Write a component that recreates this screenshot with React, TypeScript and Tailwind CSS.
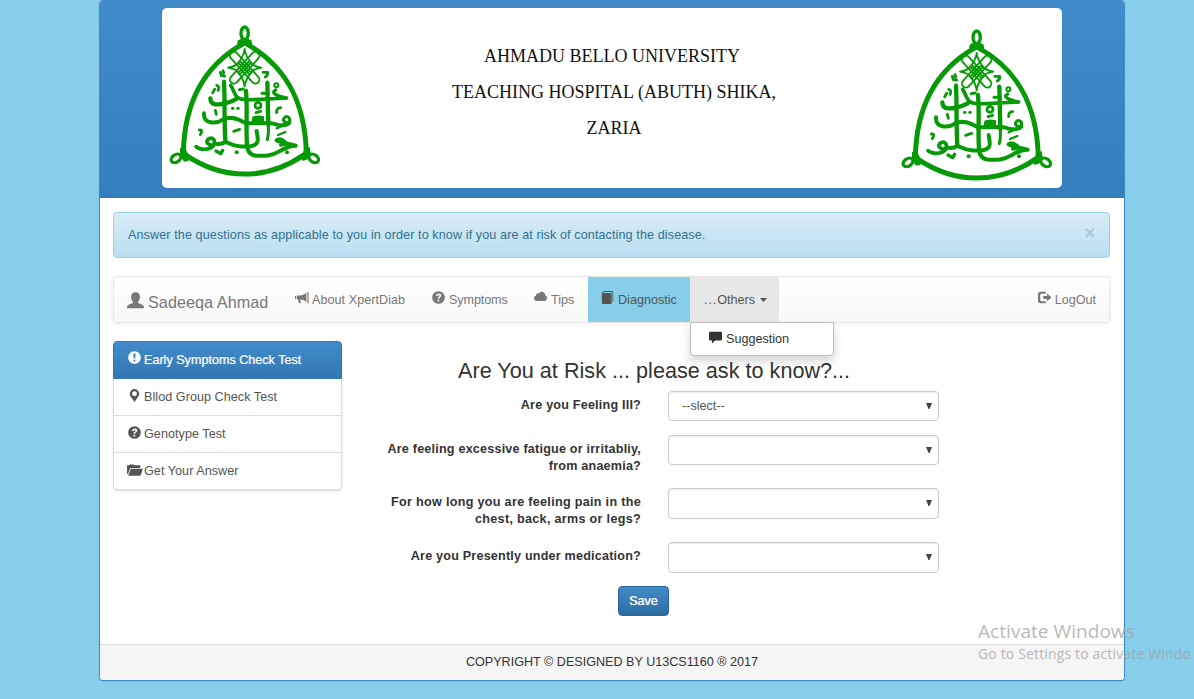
import React from "react";

function Crest() {
  return (
    <svg viewBox="24 42 462 462" className="h-[154px] w-[154px]" fill="none" stroke="#069a06" strokeLinecap="round" strokeLinejoin="round">
      <g strokeWidth="15">
        <path d="M250 101C134 166 73 272 70 430" />
        <path d="M258 101C376 166 435 272 439 430" />
        <path d="M74 433C190 512 320 512 434 433" />
      </g>
      <g strokeWidth="10">
        <ellipse cx="254" cy="70" rx="11" ry="19" />
        <ellipse cx="48" cy="445" rx="16" ry="11" transform="rotate(-35 48 445)" />
        <ellipse cx="461" cy="445" rx="16" ry="11" transform="rotate(35 461 445)" />
      </g>
      <path fill="#069a06" stroke="none" d="M234 91l9-4h22l9 4 3 11-17 4h-12l-17-4zM60 414l14-4 14 30-2 12-14 3-12-18zM449 412l-14 0-12 32 4 8 12-2 14-16z" />
      <g transform="translate(254 173)" strokeWidth="5.5">
        <rect x="-60" y="-12" width="120" height="24" rx="12" transform="rotate(48)" />
        <rect x="-60" y="-12" width="120" height="24" rx="12" transform="rotate(-48)" />
        <path d="M0-56C-3-34-12-22-24-10M0-56C3-34 12-22 24-10M0 56C-3 34-12 22-24 10M0 56C3 34 12 22 24 10M-50 0Q-30-3-18-14L14 20M50 0Q30-3 18-14L-14 20M-50 0Q-30 3-18 14L14-20M50 0Q30 3 18 14L-14-20" />
      </g>
      <g strokeWidth="13">
        <path d="M192 215C195 270 192 330 196 394" />
        <path d="M258 243C263 300 257 350 261 405" />
        <path d="M322 218L325 345" />
        <path d="M325 345C326 365 325 378 322 389" strokeWidth="9" />
        <path d="M151 265C152 289 178 284 193 280C211 276 224 272 232 264" />
        <path d="M212 226C220 238 222 252 232 262C240 270 260 270 284 269L380 264" strokeWidth="11" />
        <path d="M347 240C332 247 345 256 378 264" strokeWidth="10" />
        <path d="M306 250H325" strokeWidth="9" />
        <path d="M132 310C130 343 168 343 190 328C213 317 235 327 255 338C275 343 325 335 347 343C363 347 380 347 388 338" strokeWidth="12" />
        <path d="M388 338C393 318 377 315 371 326C367 333 378 339 388 338" strokeWidth="9" />
        <path d="M108 410C121 422 151 420 161 406C168 390 158 381 147 386C133 395 144 407 160 405" strokeWidth="11" />
        <path d="M164 400C176 404 186 402 196 396C206 398 218 408 237 409C267 411 290 410 293 393C294 380 291 374 290 363" strokeWidth="12" />
        <path d="M350 391C358 384 369 390 379 400L407 407C386 407 370 417 356 425C332 440 311 438 291 437C271 437 261 425 261 400" strokeWidth="12" />
        <path d="M354 394L378 402L362 405" strokeWidth="10" />
      </g>
      <g strokeWidth="8.5">
        <path d="M181 187L184 197L194 198M189 182L191 189" />
        <path d="M309 187H323Q324 196 316 201" />
        <circle cx="349" cy="226" r="6" strokeWidth="6" />
        <path d="M170 226Q180 228 174 241M164 238L158 248" />
        <path d="M238 239L250 237" />
        <circle cx="294" cy="286" r="9" />
        <path d="M288 308L302 304M166 301L169 313M350 308Q349 294 362 293" />
        <path d="M350 355L366 348M354 375L376 366" strokeWidth="7" />
        <path d="M221 364L239 358M118 360Q130 358 121 374" />
        <path d="M168 423L182 431L188 421" strokeWidth="10" />
      </g>
      <g fill="#069a06" stroke="none">
        <path d="M277 320Q294 313 312 319V336H275Z" />
        <circle cx="218" cy="295" r="5" />
        <circle cx="234" cy="295" r="5" />
        <circle cx="230" cy="427" r="6" />
        <circle cx="381" cy="427" r="6" />
      </g>
    </svg>
  );
}

const ICONS: Record<string, React.ReactNode> = {
  user: <path d="M8 .2c2.700 0 4.200 1.700 4.200 4.200 0 1.900-.7 3.700-1.900 4.700-.2.8.2 1.300 1 1.600l3.200 1.300c1 .5 1.500 1.500 1.500 3.200H0c0-1.700.5-2.700 1.500-3.200l3.200-1.300c.8-.3 1.200-.8 1-1.600-1.200-1-1.900-2.800-1.900-4.700C3.800 1.900 5.300.2 8 .2z" />,
  bullhorn: <path d="M14.200 1h1.300v13h-1.300zM13 2v10.500C10.500 10.300 8 9.600 5.800 9.600l1 4.400H4.600L3.200 9.500H2V5h3.500C8 5 10.800 4 13 2zM0 5.700h1.200V9H0z" />,
  question: <path fillRule="evenodd" d="M8 .2a7.800 7.800 0 110 15.600A7.800 7.800 0 018 .2zM5 6.300h2.200C7.200 5.500 7.600 5 8.200 5s1 .4 1 .9c0 1.200-2.400 1.500-2.400 3.700h2c0-1.400 2.700-1.900 2.700-4C11.500 4 10.200 3 8.300 3 6.300 3 5 4.200 5 6.300zM6.800 10.800V13h2.100v-2.200z" />,
  exclamation: <path fillRule="evenodd" d="M8 .2a7.800 7.800 0 110 15.600A7.800 7.800 0 018 .2zM6.600 3l.5 6.200h1.800L9.400 3zM6.900 10.700V13h2.200v-2.300z" />,
  cloud: <path d="M3.500 13.500C1.400 13.500 0 12 0 10.200c0-1.600 1-2.800 2.500-3.100C2.400 5.300 3.700 4 5.200 4c.4 0 .8.1 1.200.3C7 2.900 8.100 2 9.700 2c2.300 0 4 1.800 4 4v.5C15.200 7 16 8.300 16 9.900c0 2-1.400 3.600-3.500 3.600z" />,
  book: <path d="M3.500 0H15v13.500h-1V1.200H3.600L2.300 2.400H13V16H2.200L1 14.700V2.500z" />,
  comment: <path d="M1.500 1h13c.8 0 1.500.6 1.500 1.400v7.900c0 .8-.7 1.400-1.500 1.400H7.800L3.600 15.500v-3.800H1.500C.7 11.700 0 11.100 0 10.300V2.400C0 1.600.7 1 1.500 1z" />,
  logout: <path d="M9.500 1v2.300H4.300c-1 0-1.500.5-1.500 1.400v6.500c0 .9.5 1.400 1.500 1.400h5.200V15h-6C1.300 15 0 13.800 0 11.700V4.400C0 2.200 1.300 1 3.500 1zM11 3.200L16.600 8 11 12.700V9.800H6.500V6.200H11z" />,
  marker: <path fillRule="evenodd" d="M8 0a5.800 5.800 0 015.800 5.800c0 2.700-1.600 4.100-3 6.200L8 16l-2.700-4c-1.500-2.100-3.100-3.500-3.100-6.200A5.800 5.800 0 018 0zm0 2.800a3 3 0 100 6 3 3 0 000-6z" />,
  folder: <path d="M0 2.500h2l1-1h3.800l1 1h6.400v2.700H3.400L1.400 11 0 12zM4 6h13l-2.600 7.500H1.200z" />,
};

function Icon({ name, className }: { name: string; className: string }) {
  return (
    <svg viewBox="0 0 16 16" fill="currentColor" className={`shrink-0 overflow-visible ${className}`}>
      {ICONS[name]}
    </svg>
  );
}

function Select({ value, size }: { value?: string; size: string }) {
  return (
    <div className={`flex w-[271px] items-center justify-between rounded border border-[#ccc] bg-white pr-[6px] pl-[13px] text-[#555] shadow-[inset_0_1px_1px_rgba(0,0,0,0.075)] ${size}`}>
      <span>{value}</span>
      <svg viewBox="0 0 6 6" className="mb-[1px] h-[6px] w-[6px]" fill="#444">
        <path d="M0 0h6L3.500 6h-1z" />
      </svg>
    </div>
  );
}

export default function App() {
  return (
    <div className="relative h-[699px] w-[1194px] overflow-hidden bg-[#87ceeb] pl-[99px] font-['Liberation_Sans',Arial,sans-serif] text-[12.600px] leading-[18px] text-[#333]">
      <div className="flex h-[681px] w-[1026px] flex-col overflow-hidden rounded border border-t-0 border-[#428bca] bg-white shadow-[0_1px_2px_rgba(0,0,0,0.05)]">
        <header className="h-[198px] shrink-0 bg-linear-to-b from-[#428bca] to-[#357ebd] pt-2">
          <div className="mx-auto flex h-[180px] w-[900px] justify-between rounded-[5px] bg-white pr-[8px] pl-[6px]">
            <div className="pt-[16px]"><Crest /></div>
            <div className="w-[400px] pt-[30px] pl-[6px] text-center font-['Liberation_Serif',serif] text-[18px] leading-[36px] whitespace-nowrap text-[#111]">
              <p className="-ml-1">AHMADU BELLO UNIVERSITY</p>
              <p>TEACHING HOSPITAL (ABUTH) SHIKA,</p>
              <p>ZARIA</p>
            </div>
            <div className="pt-[20px]"><Crest /></div>
          </div>
        </header>

        <main className="flex-1 pt-[14px] pl-[13px]">
          <div className="flex h-[46px] w-[997px] justify-between rounded border border-[#9acfea] bg-linear-to-b from-[#d9edf7] to-[#b9def0] px-[14px] pt-[13px] text-[#31708f]">
            <span className="tracking-[0.1px]">Answer the questions as applicable to you in order to know if you are at risk of contacting the disease.</span>
            <span className="-mt-[2px] text-[18px] font-bold text-[#a5c9da]">×</span>
          </div>

          <nav className="mt-[18px] flex h-[47px] w-[997px] rounded border border-[#e7e7e7] bg-linear-to-b from-white to-[#f8f8f8] whitespace-nowrap text-[#777] shadow-[0_1px_5px_rgba(0,0,0,0.075)]">
            <a className="flex w-[168px] pt-[16px] pl-[13px] text-[16.200px] tracking-[0.05px]">
              <Icon name="user" className="-mt-[1px] mr-[4px] h-[17px] w-[17px]" />
              Sadeeqa Ahmad
            </a>
            <a className="flex w-[137px] pt-[14px] pl-[13px] tracking-[0.05px]">
              <Icon name="bullhorn" className="mr-[3px] h-[14px] w-[14px]" />
              About XpertDiab
            </a>
            <a className="flex w-[102px] pt-[14px] pl-[13px] tracking-[-0.1px]">
              <Icon name="question" className="mr-[4px] h-[13px] w-[13px]" />
              Symptoms
            </a>
            <a className="flex w-[67px] pt-[14px] pl-[13px]">
              <Icon name="cloud" className="-mt-[1px] mr-[4px] h-[13px] w-[13px]" />
              Tips
            </a>
            <a className="flex w-[102px] bg-[#87ceeb] pt-[14px] pl-[13px] text-[#555]">
              <Icon name="book" className="mr-[4px] h-[13px] w-[13px]" />
              Diagnostic
            </a>
            <div className="relative w-[89px] bg-[#e7e7e7] pt-[14px] pl-[14px] text-[#555]">
              <a className="flex">
                <span className="tracking-[0.9px]">...</span>Others
                <svg viewBox="0 0 7 4" className="mt-[7px] ml-[5px] h-[4px] w-[7px]" fill="#555"><path d="M0 0h7L3.500 4z" /></svg>
              </a>
              <div className="absolute top-[45px] left-0 z-10 flex h-[34px] w-[144px] rounded-b border border-[#bfbfbf] bg-white pt-[7px] pl-[18px] text-[#333] shadow-[0_5px_10px_rgba(0,0,0,0.175)]">
                <Icon name="comment" className="mt-[1px] mr-[4px] h-[13px] w-[13px]" />
                Suggestion
              </div>
            </div>
            <a className="ml-auto flex pt-[14px] pr-[13px]">
              <Icon name="logout" className="mr-[4px] h-[13px] w-[13px]" />
              LogOut
            </a>
          </nav>

          <div className="mt-[18px] flex">
            <ul className="h-[149px] w-[229px] rounded text-[#555] shadow-[0_1px_2px_rgba(0,0,0,0.15)]">
              <li className="flex h-[38px] rounded-t border border-[#3278b3] bg-linear-to-b from-[#428bca] to-[#3278b3] pt-[9px] pl-[14px] text-white [text-shadow:0_-1px_0_#3278b3,0_0_1px_#fff]">
                <Icon name="exclamation" className="mr-[3px] h-[13px] w-[13px]" />
                Early Symptoms Check Test
              </li>
              <li className="flex h-[37px] border-x border-b border-[#ddd] pt-[9px] pl-[14px] tracking-[0.05px]">
                <Icon name="marker" className="mt-[1px] mr-[3px] h-[13px] w-[13px]" />
                Bllod Group Check Test
              </li>
              <li className="flex h-[37px] border-x border-b border-[#ddd] pt-[9px] pl-[14px] tracking-[0.05px]">
                <Icon name="question" className="mt-[1px] mr-[3px] h-[13px] w-[13px]" />
                Genotype Test
              </li>
              <li className="flex h-[37px] rounded-b border-x border-b border-[#ddd] pt-[9px] pl-[13px] tracking-[0.05px]">
                <Icon name="folder" className="mt-[1px] mr-[2px] h-[15px] w-[15px]" />
                Get Your Answer
              </li>
            </ul>

            <form className="ml-[32px] w-[565px] pt-[18px]">
              <h3 className="pl-[84px] text-[21.600px] leading-[24px] tracking-[0.02px] whitespace-nowrap">Are You at Risk ... please ask to know?...</h3>
              <div className="mt-[8px] grid grid-cols-[267px_271px] gap-x-[27px] text-right leading-[17px] font-bold tracking-[0.2px]">
                <label className="h-[44px] pt-[6px]">Are you Feeling III?</label>
                <div className="text-left font-normal tracking-normal"><Select value="--slect--" size="h-[30px]" /></div>
                <label className="h-[53px] pt-[6px]">Are feeling excessive fatigue or irritabliy,<br />from anaemia?</label>
                <Select size="h-[30px]" />
                <label className="h-[54px] pt-[6px] tracking-[0.3px]">For how long you are feeling pain in the<br />chest, back, arms or legs?</label>
                <Select size="h-[31px]" />
                <label className="h-[44px] pt-[6px]">Are you Presently under medication?</label>
                <Select size="h-[31px]" />
              </div>
              <button type="button" className="ml-[244px] h-[30px] w-[51px] rounded border border-[#2b669a] bg-linear-to-b from-[#428bca] to-[#2d6ca2] text-white [text-shadow:0_-1px_0_rgba(0,0,0,0.2),0_0_1px_#fff]">Save</button>
            </form>
          </div>
        </main>

        <footer className="h-[36px] shrink-0 border-t border-[#ddd] bg-[#f5f5f5] pt-[8px] text-center">
          COPYRIGHT © DESIGNED BY U13CS1160 ® 2017
        </footer>
      </div>

      <div className="absolute top-[618px] left-[978px] font-['Open_Sans',sans-serif] whitespace-nowrap text-[#a0a0a0]/75">
        <p className="text-[19px] leading-[26px] tracking-[0.05px]">Activate Windows</p>
        <p className="text-[14px] leading-[19px] tracking-[0.15px]">Go to Settings to activate Windo</p>
      </div>
    </div>
  );
}
